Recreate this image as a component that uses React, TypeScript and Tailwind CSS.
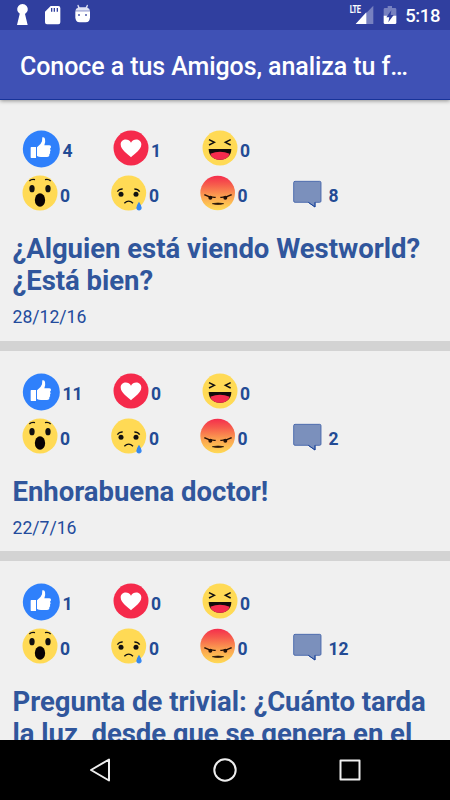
import React from "react";

type Post = {
  title: string[];
  date: string;
  like: number;
  love: number;
  haha: number;
  wow: number;
  sad: number;
  angry: number;
  comments: number;
};

const posts: Post[] = [
  { title: ["¿Alguien está viendo Westworld?", "¿Está bien?"], date: "28/12/16", like: 4, love: 1, haha: 0, wow: 0, sad: 0, angry: 0, comments: 8 },
  { title: ["Enhorabuena doctor!"], date: "22/7/16", like: 11, love: 0, haha: 0, wow: 0, sad: 0, angry: 0, comments: 2 },
  { title: ["Pregunta de trivial: ¿Cuánto tarda", "la luz, desde que se genera en el"], date: "", like: 1, love: 0, haha: 0, wow: 0, sad: 0, angry: 0, comments: 12 },
];

const Like = () => (
  <svg className="h-[38px] w-[38px] shrink-0" viewBox="0 0 114 114">
    <circle cx="58" cy="57" r="55.5" fill="#2f80fb" />
    <path fill="#fff" d="M28 51h14v33H28q-2 0-2-2V53q0-2 2-2ZM45 52q12-8 15-18l1-12q7-2 8 5 2 7-2 19h15q6 0 5 6-1 3-3 4 4 4 0 9 2 5-2 8 1 8-7 8H57q-7 0-12-3Z" />
  </svg>
);

const Love = () => (
  <svg className="h-9 w-9 shrink-0" viewBox="0 0 108 108">
    <circle cx="54" cy="54" r="52.5" fill="#f52a4b" />
    <path fill="#fff" d="M54 82C45 72 23 61 23 43c0-17 24-20 31-5 7-15 31-12 31 5 0 18-22 29-31 39Z" />
  </svg>
);

const Haha = () => (
  <svg className="h-9 w-9 shrink-0" viewBox="0 0 108 108">
    <circle cx="54" cy="54" r="52.5" fill="#ffda55" />
    <path d="m21 29 16 8-16 8M86 29l-16 8 16 8" fill="none" stroke="#111" strokeWidth="4.5" />
    <path d="M20 57h68c0 20-14 32-34 32S20 77 20 57Z" fill="#110b0b" />
    <path d="M25 71q29-11 58 0c-4 12-15 18-29 18s-25-6-29-18Z" fill="#f52b4d" />
  </svg>
);

const Wow = () => (
  <svg className="h-9 w-9 shrink-0" viewBox="0 0 108 108">
    <circle cx="54" cy="54" r="52.5" fill="#ffda55" />
    <path d="M22 18q7-7 17-4M69 14q10-3 17 4" fill="none" stroke="#111" strokeWidth="4" />
    <ellipse cx="30" cy="41" rx="8" ry="11" fill="#111" />
    <ellipse cx="78" cy="41" rx="8" ry="11" fill="#111" />
    <ellipse cx="54" cy="75" rx="15.5" ry="20" fill="#090303" />
  </svg>
);

const Sad = () => (
  <svg className="h-9 w-9 shrink-0" viewBox="0 0 108 108">
    <circle cx="53" cy="54" r="52.5" fill="#ffda55" />
    <path d="M19 50q6-9 16-8M70 42q11 0 16 8" fill="none" stroke="#111" strokeWidth="4" />
    <circle cx="30" cy="58" r="7.5" fill="#111" />
    <circle cx="75" cy="58" r="7.5" fill="#111" />
    <path d="M40 85q13-13 26 0" fill="none" stroke="#111" strokeWidth="4" />
    <path d="M84 80q-8 12-8 18c0 11 16 11 16 0q0-6-8-18Z" fill="#3587ef" />
  </svg>
);

const Angry = () => (
  <svg className="h-9 w-9 shrink-0" viewBox="0 0 108 108">
    <defs>
      <linearGradient id="anger" x1="0" y1="0" x2="0" y2="1">
        <stop offset="0" stopColor="#f52d4c" />
        <stop offset=".25" stopColor="#f65a4c" />
        <stop offset=".6" stopColor="#fba150" />
        <stop offset="1" stopColor="#ffdb55" />
      </linearGradient>
    </defs>
    <circle cx="53" cy="54" r="52" fill="url(#anger)" />
    <path d="M13 59q15 9 34 8M61 67q18 1 34-8" fill="none" stroke="#221008" strokeWidth="4" />
    <circle cx="31" cy="68" r="6" fill="#221008" />
    <circle cx="76" cy="68" r="6" fill="#221008" />
    <path d="M37 86q17-4 34 0-17 5-34 0Z" fill="#221008" stroke="#221008" strokeWidth="2" />
  </svg>
);

const Bubble = () => (
  <svg className="mt-[5px] h-[30px] w-[30px] shrink-0" viewBox="0 0 90 90">
    <path d="M6 4h74q4 0 4 4v55q0 4-4 4H66v14L46 67H6q-4 0-4-4V8q0-4 4-4Z" fill="#7b90bc" stroke="#3f60a8" strokeWidth="2.5" />
    <path d="m46 67 20 14V67" fill="none" stroke="#17429a" strokeWidth="3" />
  </svg>
);

const Count = ({ value, className = "" }: { value: number; className?: string }) => (
  <span className={`mt-[11px] text-[17.5px] leading-5 font-bold text-[#234b94] ${className}`}>{value}</span>
);

const Card = ({ post }: { post: Post }) => (
  <article className="shrink-0 border-b-[10px] border-[#d3d3d3] pt-[22px] pb-[13.4px]">
    <div className="flex h-[45px] items-start pl-[22px]">
      <div className="flex w-[91px] items-start"><Like /><Count value={post.like} className="ml-[2.5px]" /></div>
      <div className="flex w-[89px] items-start"><Love /><Count value={post.love} className="ml-[2px]" /></div>
      <div className="flex items-start"><Haha /><Count value={post.haha} className="ml-[2px]" /></div>
    </div>
    <div className="flex h-[58.2px] items-start pl-[22px]">
      <div className="flex w-[89px] items-start"><Wow /><Count value={post.wow} className="ml-[2px]" /></div>
      <div className="flex w-[88.5px] items-start"><Sad /><Count value={post.sad} className="ml-[2px]" /></div>
      <div className="flex w-[93px] items-start"><Angry /><Count value={post.angry} className="ml-[2px]" /></div>
      <div className="flex items-start"><Bubble /><Count value={post.comments} className="ml-[6px]" /></div>
    </div>
    <h2 className="pl-[12.5px] text-[27.5px] leading-8 font-bold tracking-[-0.02px] whitespace-nowrap text-[#30569c]">
      {post.title.map((line) => <span key={line} className="block">{line}</span>)}
    </h2>
    {post.date && <p className="mt-[10px] pl-[12.5px] text-[17.6px] leading-5 text-[#234b9c]">{post.date}</p>}
  </article>
);

export default function App() {
  return (
    <div className="flex h-[800px] w-[450px] flex-col overflow-hidden bg-[#f0f0f0] font-[Roboto,sans-serif]">
      <header className="z-10 shrink-0 shadow-[0_1px_4px_rgba(0,0,0,0.4)]">
        <div className="flex h-[30px] items-center justify-between bg-[#303f9f] text-white">
          <svg className="h-[30px] w-[110px]" viewBox="0 0 330 90">
            <path fill="#fff" d="M60 42a16 16 0 1 1 15 0l8 33H51l8-33ZM152 18h23q6 0 6 6v43q0 6-6 6h-34q-6 0-6-6V35Z" />
            <path d="M155 24v11M163 24v11M172 24v11" stroke="#303f9f" strokeWidth="4" />
            <path d="M226 34h44v18q0 15-13 15h-18q-13 0-13-15Z" fill="#fff" />
            <path d="M226 32q1-7 8-9l-2-8 3-1 4 8h18l4-8 3 1-2 8q7 2 8 9Z" fill="#dfe2f4" />
            <path d="M234 42h6v6h-6ZM255 42h6v6h-6Z" fill="#7882bf" />
          </svg>
          <div className="flex items-center pr-[10px]">
            <span className="mr-[-10px] mb-[10px] text-[10px] leading-none font-bold tracking-[-0.5px]"><span className="inline-block origin-right scale-x-75">LTE</span></span>
            <svg className="h-[30px] w-[52px]" viewBox="0 0 156 90">
              <path d="M70 17v55H17Z" fill="#7781c0" />
              <path d="M49 37v35H17Z" fill="#fff" />
              <path d="M105 24h8v-6h13v6h9q4 0 4 4v20h-38V28q0-4 4-4Z" fill="#7781c0" />
              <path d="M101 47h38v21q0 4-4 4h-30q-4 0-4-4Z" fill="#fff" />
              <path d="m124 31-15 21h9l-3 15 16-22h-9Z" fill="#303f9f" />
            </svg>
            <span className="ml-[3px] pt-px text-[18.5px] leading-5 font-medium tracking-[-0.4px]">5:18</span>
          </div>
        </div>
        <div className="flex h-[70px] items-center border-b border-[#183399] bg-[#3f51b5] pt-[4px] pl-5">
          <h1 className="text-[25px] leading-[30px] font-medium tracking-[-0.08px] whitespace-nowrap text-white">Conoce a tus Amigos, analiza tu f…</h1>
        </div>
      </header>
      <main className="flex min-h-0 flex-1 flex-col overflow-hidden pt-2">
        {posts.map((post) => <Card key={post.title[0]} post={post} />)}
      </main>
      <nav className="z-10 flex h-[60px] shrink-0 items-center justify-between bg-black px-[88px]">
        <svg className="h-6 w-6" viewBox="0 0 24 24" fill="none" stroke="#eee" strokeWidth="2" strokeLinejoin="round"><path d="M21 1.5v21L3 12Z" /></svg>
        <svg className="h-6 w-6" viewBox="0 0 24 24" fill="none" stroke="#eee" strokeWidth="2"><circle cx="12" cy="12" r="10.7" /></svg>
        <svg className="h-6 w-6" viewBox="0 0 24 24" fill="none" stroke="#eee" strokeWidth="2" strokeLinejoin="round"><path d="M2.5 2.5h19v19h-19Z" /></svg>
      </nav>
    </div>
  );
}
